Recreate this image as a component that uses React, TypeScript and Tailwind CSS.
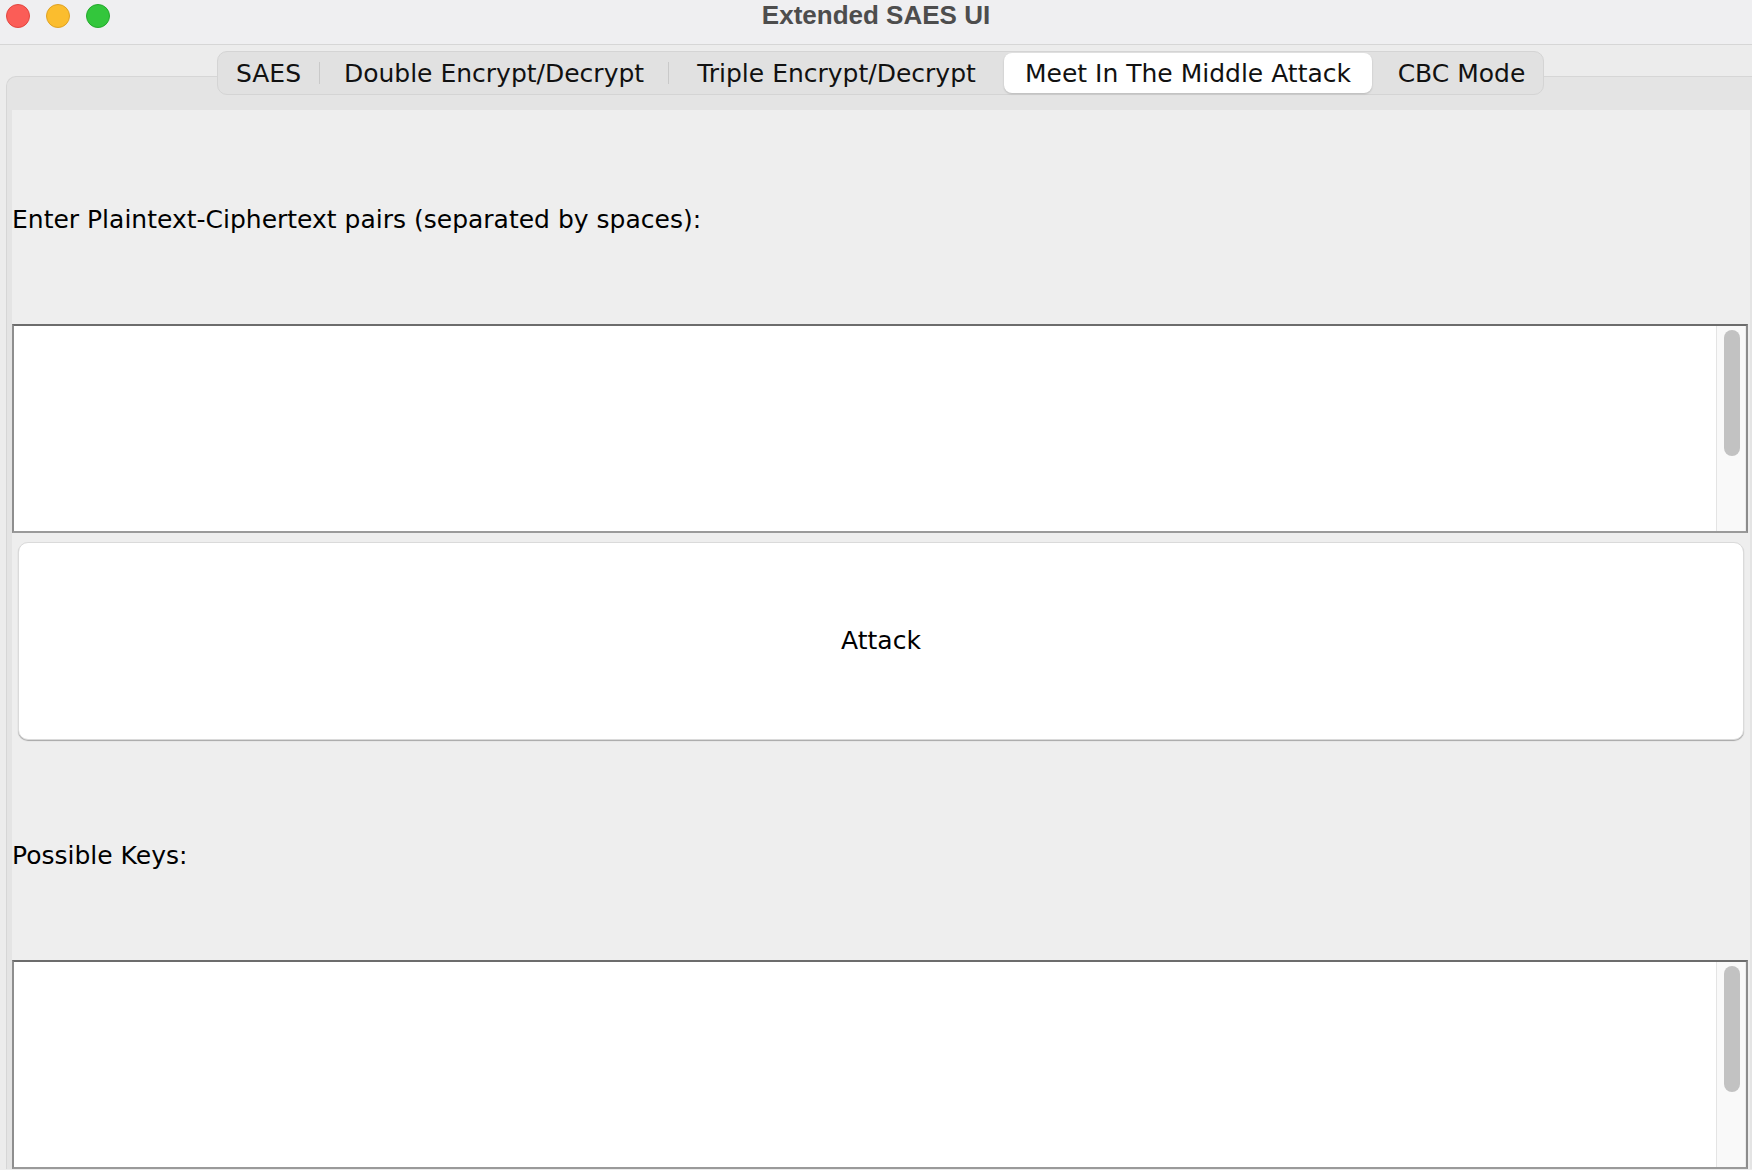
const TABS_LEFT = [
  { label: "SAES", w: "w-[101px]" },
  { label: "Double Encrypt/Decrypt", w: "w-[348px]" },
];

function TrafficLights() {
  return (
    <div className="flex items-start gap-[16px] pl-[6px] pt-[4px]">
      <span className="w-[24px] h-[24px] rounded-full bg-[#fb5d57] border border-[#e2463f]" />
      <span className="w-[24px] h-[24px] rounded-full bg-[#fbbd2e] border border-[#dfa224]" />
      <span className="w-[24px] h-[24px] rounded-full bg-[#33c63c] border border-[#23a92c]" />
    </div>
  );
}

function Separator() {
  return <span className="w-px h-[22px] self-center bg-[#c9c9c9]" />;
}

function TabBar() {
  return (
    <div className="flex justify-center pt-[6px] relative z-10">
      <div className="ml-[9px] flex items-center h-[44px] rounded-[10px] bg-[#e1e1e1] border border-[#d4d4d4]">
        {TABS_LEFT.map((t) => (
          <div key={t.label} className="flex items-center">
            <div className={`${t.w} pt-[2px] text-center text-[25px] leading-[30px] text-[#111]`}>{t.label}</div>
            <Separator />
          </div>
        ))}
        <div className="w-[335px] pt-[2px] text-center text-[25px] leading-[30px] text-[#111]">
          Triple Encrypt/Decrypt
        </div>
        <div className="w-[368px] h-[40px] pt-[2px] flex items-center justify-center rounded-[8px] bg-white shadow-[0_1px_2px_rgba(0,0,0,0.18)] text-[25px] leading-[30px] text-[#111]">
          Meet In The Middle Attack
        </div>
        <div className="w-[171px] pl-[8px] pt-[2px] text-center text-[25px] leading-[30px] text-[#111]">CBC Mode</div>
      </div>
    </div>
  );
}

function TextArea() {
  return (
    <div className="h-[209px] mr-[2px] bg-white border-2 border-t-[#6c6c6c] border-l-[#8e8e8e] border-r-[#8c8c8c] border-b-[#9a9a9a] flex justify-end">
      <div className="w-[30px] h-full bg-[#f9f9f9] border-l border-r border-l-[#e4e4e4] border-r-[#ececec] pt-[4px] pl-[7px]">
        <div className="w-[16px] h-[126px] rounded-full bg-[#c2c2c2]" />
      </div>
    </div>
  );
}

export default function App() {
  return (
    <div className="w-[1752px] h-[1170px] overflow-hidden bg-[#ececec] font-['DejaVu_Sans',sans-serif]">
      <div className="h-[45px] bg-[#efeff1] border-b border-[#d6d6d6] grid grid-cols-[1fr_auto_1fr]">
        <TrafficLights />
        <div className="pt-[2px] font-['Liberation_Sans',Arial,sans-serif] font-bold text-[26px] leading-[26px] text-[#4d4d4d]">
          Extended SAES UI
        </div>
        <div />
      </div>

      <TabBar />

      <div className="-mt-[19px] ml-[6px] w-[1750px] rounded-tl-[10px] border-t border-l border-[#d6d6d6] bg-[#e4e4e4] pt-[33px] pl-[5px] pr-[6px]">
        <div className="bg-[#eeeeee] flex flex-col">
          <div className="h-[214px] pt-[6px] flex items-center text-[25px] text-black">
            Enter Plaintext-Ciphertext pairs (separated by spaces):
          </div>
          <TextArea />
          <div className="h-[213px] pt-[9px] pb-[6px] px-[6px]">
            <button
              type="button"
              className="w-full h-full rounded-[10px] bg-white border border-[#dadada] shadow-[0_1px_1px_rgba(0,0,0,0.3)] flex items-center justify-center text-[25px] text-black"
            >
              Attack
            </button>
          </div>
          <div className="h-[214px] pt-[6px] flex items-center text-[25px] text-black">Possible Keys:</div>
          <TextArea />
        </div>
      </div>
    </div>
  );
}
